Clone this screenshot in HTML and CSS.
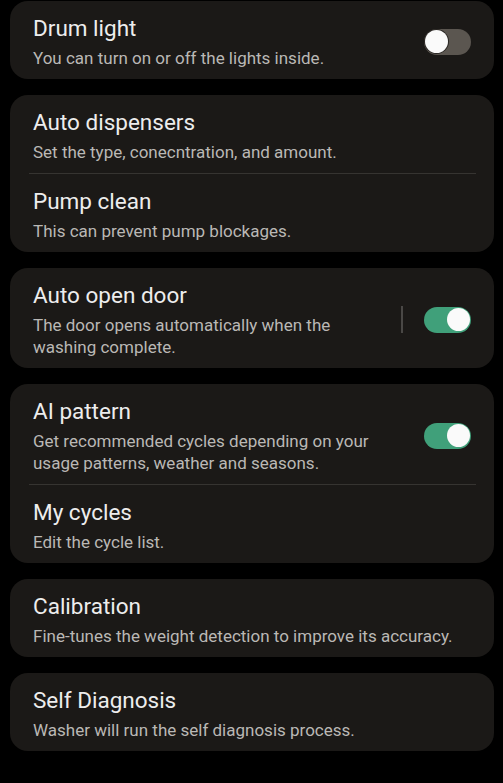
FILE: index.html
```html
<!DOCTYPE html>
<html lang="en">
<head>
<meta charset="utf-8">
<title>Washer settings</title>
<link rel="stylesheet" href="styles.css">
</head>
<body>
<main class="list">
  <section class="card">
    <div class="row">
      <div class="text">
        <div class="title">Drum light</div>
        <div class="desc">You can turn on or off the lights inside.</div>
      </div>
      <div class="control">
        <span class="switch off"><span class="knob"></span></span>
      </div>
    </div>
  </section>

  <section class="card">
    <div class="row">
      <div class="text">
        <div class="title">Auto dispensers</div>
        <div class="desc">Set the type, conecntration, and amount.</div>
      </div>
    </div>
    <div class="divider"></div>
    <div class="row">
      <div class="text">
        <div class="title">Pump clean</div>
        <div class="desc">This can prevent pump blockages.</div>
      </div>
    </div>
  </section>

  <section class="card">
    <div class="row">
      <div class="text">
        <div class="title">Auto open door</div>
        <div class="desc">The door opens automatically when the washing complete.</div>
      </div>
      <div class="control">
        <span class="vline"></span>
        <span class="switch on"><span class="knob"></span></span>
      </div>
    </div>
  </section>

  <section class="card">
    <div class="row">
      <div class="text">
        <div class="title">AI pattern</div>
        <div class="desc">Get recommended cycles depending on your usage patterns, weather and seasons.</div>
      </div>
      <div class="control">
        <span class="switch on"><span class="knob"></span></span>
      </div>
    </div>
    <div class="divider"></div>
    <div class="row">
      <div class="text">
        <div class="title">My cycles</div>
        <div class="desc">Edit the cycle list.</div>
      </div>
    </div>
  </section>

  <section class="card">
    <div class="row">
      <div class="text">
        <div class="title">Calibration</div>
        <div class="desc">Fine-tunes the weight detection to improve its accuracy.</div>
      </div>
    </div>
  </section>

  <section class="card">
    <div class="row">
      <div class="text">
        <div class="title">Self Diagnosis</div>
        <div class="desc">Washer will run the self diagnosis process.</div>
      </div>
    </div>
  </section>
</main>
</body>
</html>
```

FILE: styles.css
```css
html, body {
  margin: 0;
  padding: 0;
  background: #000;
}

body {
  font-family: Roboto, "Noto Sans", sans-serif;
  width: 503px;
  height: 783px;
  overflow: hidden;
}

.list {
  display: flex;
  flex-direction: column;
  gap: 16px;
  padding: 1px 9px 0 10px;
}

.card {
  background: #1b1917;
  border-radius: 18px;
  display: flex;
  flex-direction: column;
}

.row {
  display: flex;
  align-items: center;
  padding: 13px 23px 10px 23px;
}

.text {
  flex: 1;
  min-width: 0;
}

.title {
  color: #ededed;
  font-size: 22.5px;
  line-height: 28px;
}

.desc {
  color: #bab8b5;
  font-size: 17px;
  line-height: 22px;
  margin-top: 5px;
}

.control {
  width: 93px;
  flex: none;
  display: flex;
  align-items: center;
  justify-content: flex-end;
  gap: 21px;
}

.vline {
  width: 2px;
  height: 27px;
  background: #4a4846;
}

.switch {
  width: 47px;
  height: 26px;
  border-radius: 13px;
  display: flex;
  align-items: center;
  padding: 0 1px;
  box-sizing: border-box;
}

.switch.off {
  background: #5b5650;
  justify-content: flex-start;
}

.switch.on {
  background: #40a07a;
  justify-content: flex-end;
}

.knob {
  width: 23px;
  height: 23px;
  border-radius: 50%;
  background: #fafafa;
}

.switch.off .knob {
  box-shadow: 0 0 0 1px #2a2724;
}

.divider {
  height: 1px;
  background: #363431;
  margin: 0 18px 0 19px;
}
```
